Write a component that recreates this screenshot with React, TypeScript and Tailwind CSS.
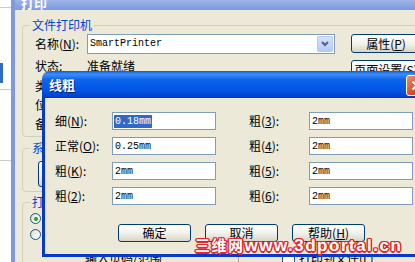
import type { ReactNode } from "react";

const CJK = "font-['SimSun','Noto_Sans_CJK_SC',sans-serif]";
const MONO = "font-['Liberation_Mono','Noto_Sans_CJK_SC',monospace]";

function XpButton({ children, className = "" }: { children: ReactNode; className?: string }) {
    return (
        <div
            className={`flex shrink-0 items-center justify-center rounded-[3px] border border-[#003C74] bg-linear-to-b from-white via-[#F3F2EC] to-[#D8D4C6] text-[12px] leading-none text-black ${className}`}
        >
            {children}
        </div>
    );
}

function Key({ k }: { k: string }) {
    return (
        <>
            (<span className="underline">{k}</span>)
        </>
    );
}

function Field({ value, selected }: { value: string; selected?: boolean }) {
    return (
        <div className={`flex h-[18px] w-[104px] shrink-0 items-center border border-[#7F9DB9] bg-white pl-px ${MONO} text-[10px]`}>
            {selected ? (
                <span className="bg-[#316AC5] px-px leading-[13px] text-white">{value}</span>
            ) : (
                <span className="px-px leading-[13px] text-black">{value}</span>
            )}
        </div>
    );
}

function Radio({ checked }: { checked?: boolean }) {
    return (
        <div className="flex h-[11px] w-[11px] items-center justify-center rounded-full border border-[#1C5180] bg-linear-to-br from-[#DCDCD7] to-white">
            {checked ? <div className="h-[4px] w-[4px] rounded-full bg-[#21A121]" /> : null}
        </div>
    );
}

const rows: [ReactNode, string, ReactNode, boolean?][] = [
    [<>细<Key k="N" />:</>, "0.18mm", <>粗<Key k="3" />:</>, true],
    [<>正常<Key k="O" />:</>, "0.25mm", <>粗<Key k="4" />:</>],
    [<>粗<Key k="K" />:</>, "2mm", <>粗<Key k="5" />:</>],
    [<>粗<Key k="2" />:</>, "2mm", <>粗<Key k="6" />:</>],
];

export default function App() {
    return (
        <div className={`relative flex h-[262px] w-[415px] overflow-hidden bg-white ${CJK} text-[12px] text-black`}>
            {/* window behind, left edge */}
            <div className="flex w-[11px] shrink-0 flex-col">
                <div className="h-[7px]" />
                <div className="h-px bg-[#C9C9C9]" />
                <div className="h-[55px]" />
                <div className="h-[20px] w-[3px] bg-[#316AC5]" />
                <div className="h-[6px]" />
                <div className="h-px bg-[#C9C9C9]" />
                <div className="h-[70px]" />
                <div className="h-px bg-[#C9C9C9]" />
            </div>

            {/* 打印 dialog (inactive) */}
            <div className="flex flex-1 flex-col border-l-[4px] border-[#8099DC]">
                <div className="flex h-[10px] shrink-0 items-end overflow-hidden bg-linear-to-b from-[#9DB4EA] to-[#7D97DC] pl-[6px]">
                    <span className="mb-[1px] text-[13px] font-bold leading-none text-white">打印</span>
                </div>
                <div className="flex flex-1 flex-col bg-[#ECE9D8] pl-[7px]">
                    {/* 文件打印机 */}
                    <fieldset className="mt-[8px] w-[420px] shrink-0 rounded-[4px] border border-[#D0D0BF] pb-[3px] pl-[7px]">
                        <legend className="px-[2px] leading-[14px] text-[#0046D5]">文件打印机</legend>
                        <div className="flex h-[23px] items-center">
                            <span className="w-[57px] pl-[5px]">名称<Key k="N" />:</span>
                            <div className="flex h-[20px] w-[248px] items-center justify-between border border-[#7F9DB9] bg-white pl-[2px] pr-px">
                                <span className={`${MONO} text-[10px]`}>SmartPrinter</span>
                                <div className="flex h-[16px] w-[16px] items-center justify-center rounded-[2px] border border-[#B7C9F1] bg-linear-to-b from-[#D6E2FC] to-[#B5C9F7]">
                                    <svg width="8" height="6" viewBox="0 0 8 6">
                                        <path d="M1 1l3 3 3-3" stroke="#4D6185" strokeWidth="2" fill="none" />
                                    </svg>
                                </div>
                            </div>
                            <XpButton className="ml-[16px] h-[19px] w-[70px]">
                                属性<Key k="P" />
                            </XpButton>
                        </div>
                        <div className="flex h-[21px] items-center">
                            <span className="w-[57px] pl-[5px]">状态:</span>
                            <span className="w-[248px]">准备就绪</span>
                            <XpButton className="ml-[16px] mt-[5px] h-[19px] w-[70px] self-start">
                                页面设置<Key k="S" />
                            </XpButton>
                        </div>
                        <div className="flex h-[19px] items-center pl-[5px]">类型:</div>
                        <div className="flex h-[19px] items-center pl-[5px]">位置:</div>
                        <div className="flex h-[19px] items-center pl-[5px]">备注:</div>
                    </fieldset>

                    {/* 系统 */}
                    <fieldset className="mt-[4px] w-[420px] shrink-0 rounded-[4px] border border-[#D0D0BF] pb-[4px] pl-[7px]">
                        <legend className="px-[2px] leading-[14px] text-[#0046D5]">系统</legend>
                        <XpButton className="ml-[8px] mt-[6px] h-[26px] w-[80px]">添加</XpButton>
                    </fieldset>

                    {/* 打印范围 */}
                    <fieldset className="mt-[3px] w-[420px] shrink-0 rounded-[4px] border border-[#D0D0BF] pl-[7px]">
                        <legend className="px-[2px] leading-[14px] text-[#0046D5]">打印范围</legend>
                        <div className="mt-[4px] flex items-center gap-[5px]">
                            <Radio checked />
                            <span className="leading-[11px]">全部<Key k="A" /></span>
                        </div>
                        <div className="mt-[5px] flex items-center gap-[5px]">
                            <Radio />
                            <span className="leading-[11px]">页码范围<Key k="G" /></span>
                        </div>
                        <div className="mt-[9px] flex items-start">
                            <span className="ml-[55px] w-[153px]">输入页码/范围</span>
                            <div className="h-[20px] w-px bg-[#ACA899]" />
                            <div className="ml-[43px] mt-px h-[13px] w-[13px] border border-[#1C5180] bg-white" />
                            <span className="ml-[4px]">打印到文件<Key k="L" /></span>
                        </div>
                    </fieldset>
                </div>
            </div>

            {/* 线粗 dialog */}
            <div className="absolute left-[42px] top-[71px] flex w-[390px] flex-col overflow-hidden rounded-t-[8px]">
                <div className="flex h-[27px] shrink-0 items-center justify-between bg-[linear-gradient(to_bottom,#0A5BE0_0%,#3D8DF8_12%,#0E64EA_32%,#0057E6_70%,#0046D2_90%,#003AC0_100%)] pl-[7px] pr-[5px]">
                    <span className="text-[13px] font-bold leading-none text-white [text-shadow:1px_1px_0_#0A1F75]">线粗</span>
                    <div className="mt-[1px] flex h-[21px] w-[21px] items-center justify-center rounded-[3px] border border-white bg-linear-to-br from-[#EB8F6F] via-[#D9542D] to-[#B8320F]">
                        <svg width="11" height="11" viewBox="0 0 11 11">
                            <path d="M1.5 1.5l8 8M9.5 1.5l-8 8" stroke="white" strokeWidth="2" />
                        </svg>
                    </div>
                </div>
                <div className="flex flex-col border-x-[3px] border-b-[3px] border-[#0838C8] bg-[#ECE9D8] pb-[12px] pl-[10px] pt-[14px]">
                    <div className="flex flex-col gap-[7px]">
                        {rows.map(([l, v, r, sel], i) => (
                            <div key={i} className="flex h-[18px] items-center">
                                <span className="w-[57px] shrink-0">{l}</span>
                                <Field value={v} selected={sel} />
                                <span className="ml-[33px] w-[60px] shrink-0">{r}</span>
                                <Field value="2mm" />
                            </div>
                        ))}
                    </div>
                    <div className="ml-[63px] mt-[19px] flex gap-[14px]">
                        <XpButton className="h-[18px] w-[73px]">确定</XpButton>
                        <XpButton className="h-[18px] w-[73px]">取消</XpButton>
                        <XpButton className="h-[18px] w-[73px]">
                            帮助<Key k="H" />
                        </XpButton>
                    </div>
                </div>
            </div>

            {/* watermark */}
            <div className="pointer-events-none absolute left-[195px] top-[237px] flex items-baseline font-['Liberation_Sans','Noto_Sans_CJK_SC',sans-serif] font-bold leading-none text-white [text-shadow:1.5px_0_#E0262E,-1.5px_0_#E0262E,0_1.5px_#E0262E,0_-1.5px_#E0262E,1px_1px_#E0262E,-1px_-1px_#E0262E,1px_-1px_#E0262E,-1px_1px_#E0262E]">
                <span className="text-[15px] tracking-[1.5px]">三维网</span>
                <span className="text-[17px] tracking-[1.5px]">www.3dportal.cn</span>
            </div>
        </div>
    );
}
